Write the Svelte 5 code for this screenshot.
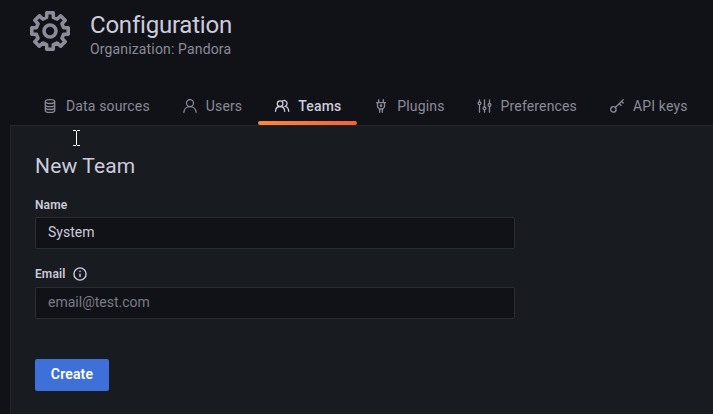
<script>
  const tabs = [
    { label: 'Data sources', icon: 'database' },
    { label: 'Users', icon: 'user' },
    { label: 'Teams', icon: 'users', active: true },
    { label: 'Plugins', icon: 'plug' },
    { label: 'Preferences', icon: 'sliders' },
    { label: 'API keys', icon: 'key' }
  ];
  let name = $state('System');
  let email = $state('');

  // Outline of an eight-toothed cog centred in a 40px box.
  const cog = Array.from({ length: 8 }, (_, i) => {
    const point = (r, deg) => {
      const a = ((i * 45 + deg - 90) * Math.PI) / 180;
      return `${(20 + r * Math.cos(a)).toFixed(2)},${(20 + r * Math.sin(a)).toFixed(2)}`;
    };
    return [point(14, -14), point(18.5, -10), point(18.5, 10), point(14, 14)].join(' ');
  }).join(' ');
</script>

<div class="page">
  <header>
    <svg class="cog" viewBox="0 0 40 40">
      <polygon points={cog} />
      <circle cx="20" cy="20" r="6" />
    </svg>
    <div>
      <h1>Configuration</h1>
      <div class="subtitle">Organization: Pandora</div>
    </div>
  </header>

  <nav>
    {#each tabs as tab}
      <a class:active={tab.active} href="#{tab.icon}">
        <svg viewBox="0 0 16 16">
          {#if tab.icon === 'database'}
            <path d="M3.300 3.600C3.300 2.300 5.200 1.700 8 1.700s4.700.6 4.700 1.900v8.800c0 1.300-1.900 1.900-4.700 1.900s-4.700-.6-4.700-1.900zM3.300 3.600c0 1.300 1.900 1.900 4.700 1.900s4.700-.6 4.700-1.900M3.300 6.700c0 1.300 1.900 1.900 4.700 1.900s4.700-.6 4.700-1.900M3.300 9.600c0 1.300 1.900 1.900 4.700 1.900s4.700-.6 4.700-1.900" />
          {:else if tab.icon === 'user'}
            <circle cx="8" cy="5.1" r="3.500" />
            <path d="M1.900 14.300c.2-3.400 2.800-5.700 6.100-5.700s5.900 2.300 6.100 5.700" />
          {:else if tab.icon === 'users'}
            <circle cx="6.100" cy="5.700" r="2.800" />
            <path d="M1.500 13.300c.2-2.800 2-4.800 4.600-4.800s4.400 2 4.600 4.800M8.800 2.800c2-1 4.300.5 4.300 2.700 0 1.300-.6 2.200-1.700 2.800 2 .6 3.200 2.500 3.300 5" />
          {:else if tab.icon === 'plug'}
            <path d="M5.700 1.600v2.900M10.300 1.600v2.900M3.500 4.700h9M4.500 4.700v4.100l1.800 2.200h3.400l1.800-2.200V4.700M6.700 11v3.300M9.300 11v3.300" />
            <circle cx="8" cy="7.700" r=".7" />
          {:else if tab.icon === 'sliders'}
            <path d="M2.500 1.800v2M2.500 6.800v7.400M7.500 1.800v6.900M7.500 11.800v2.400M12.500 1.800v3.600M12.500 8.400v5.800" />
            <circle cx="2.500" cy="5.300" r="1.400" />
            <circle cx="7.500" cy="10.300" r="1.400" />
            <circle cx="12.500" cy="6.900" r="1.400" />
          {:else}
            <circle cx="4.400" cy="11.400" r="2.700" />
            <path d="M6.300 9.500l7.900-7.900M10.300 5.500l1.700 1.700M12.500 3.300l1.700 1.700" />
          {/if}
        </svg>
        <span>{tab.label}</span>
      </a>
    {/each}
  </nav>

  <main>
    <h2>New Team</h2>
    <label for="name">Name</label>
    <input id="name" bind:value={name} />
    <label for="email" class="second">
      Email
      <svg class="info" viewBox="0 0 16 16">
        <circle cx="8" cy="8" r="6.100" />
        <path d="M8 7.400v3.600M8 4.800v1.300" />
      </svg>
    </label>
    <input id="email" placeholder="email@test.com" bind:value={email} />
    <button>Create</button>
  </main>

  <svg class="cursor" viewBox="0 0 7 16">
    <path d="M0 .5h3M4 .5h3M3.500 1v14M0 15.500h3M4 15.500h3" />
  </svg>
</div>

<style>
  :global(body) { background: #111217; }
  .page {
    position: relative;
    width: 713px;
    height: 414px;
    overflow: hidden;
    background: #111217;
    color: #ccccdc;
    font-family: Roboto, sans-serif;
    font-size: 14px;
    letter-spacing: 0.15px;
    display: flex;
    flex-direction: column;
  }
  svg { fill: none; stroke: currentColor; flex: none; }
  header { display: flex; height: 86px; padding: 11px 0 0 30px; gap: 20px; box-sizing: border-box; }
  .cog { width: 40px; height: 40px; color: #8c8c99; stroke-width: 3.6; stroke-linejoin: round; }
  h1 { margin: 0; font-size: 24px; line-height: 28px; font-weight: 400; letter-spacing: -0.22px; }
  .subtitle { line-height: 20px; color: #8b8b97; }
  nav { display: flex; height: 39px; padding-left: 26px; }
  nav a {
    position: relative;
    display: flex;
    gap: 8px;
    padding: 12px 16px 0;
    line-height: 16px;
    color: #8b8b97;
    text-decoration: none;
    white-space: nowrap;
  }
  nav svg { width: 16px; height: 16px; stroke-width: 1.3; stroke-linecap: round; }
  nav a.active { color: #ccccdc; font-weight: 500; }
  nav a.active::after {
    content: '';
    position: absolute;
    left: 0;
    right: 0;
    bottom: 0;
    height: 4px;
    border-radius: 2px;
    background: linear-gradient(90deg, #ff8833, #f55f3e);
  }
  main {
    flex: 1;
    margin-left: 10px;
    padding: 28px 24px 0;
    background: #181b1f;
    border: solid #25272c;
    border-width: 1px 0 0 1px;
  }
  h2 { margin: 0; font-size: 21px; line-height: 24px; font-weight: 400; letter-spacing: 0.15px; }
  label { display: flex; align-items: center; height: 16px; margin-top: 19px; font-size: 12px; font-weight: 600; letter-spacing: 0.1px; }
  label.second { margin-top: 17px; }
  .second + input { margin-top: 5px; }
  .info { width: 16px; height: 16px; margin-left: 7px; stroke-width: 1.4; }
  input {
    display: block;
    box-sizing: border-box;
    width: 480px;
    height: 32px;
    margin-top: 4px;
    padding: 0 12px 2px;
    border: 1px solid #2d2e34;
    border-radius: 2px;
    background: #111217;
    color: #ccccdc;
    font: inherit;
    letter-spacing: 0;
    outline: none;
  }
  input::placeholder { color: #7b7b86; opacity: 1; }
  button {
    display: block;
    width: 74px;
    height: 32px;
    margin-top: 40px;
    padding: 0 0 2px;
    border: 0;
    border-radius: 2px;
    background: #3d71d9;
    color: #fff;
    font: 600 14px Roboto, sans-serif;
    letter-spacing: 0.15px;
  }
  .cursor { position: absolute; left: 73px; top: 130px; width: 7px; height: 16px; color: #fff; }
</style>
